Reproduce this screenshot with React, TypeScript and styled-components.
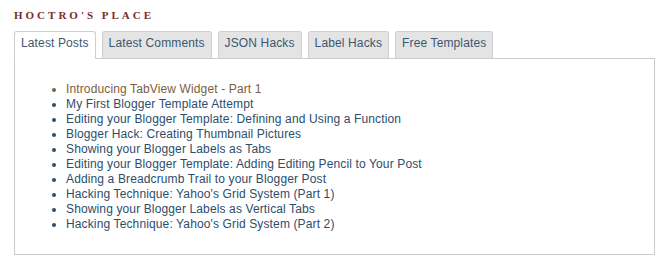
import React from "react";
import styled, { createGlobalStyle } from "styled-components";

const Global = createGlobalStyle`
  html, body { margin: 0; padding: 0; background: #fff; }
  body { font-family: "Liberation Sans", Arial, sans-serif; }
`;

const Page = styled.div`
  padding: 9px 7px 0 14px;
  width: 641px;
`;

const Title = styled.h2`
  margin: 0 0 9px;
  font-family: "Liberation Serif", "Times New Roman", serif;
  font-weight: bold;
  font-size: 11px;
  line-height: 13px;
  letter-spacing: 3px;
  color: #7d2a2a;
  text-transform: uppercase;
`;

const TabBar = styled.div`
  display: flex;
  gap: 6px;
  align-items: flex-end;
`;

const Tab = styled.div<{ $active?: boolean }>`
  font-size: 12px;
  line-height: 15px;
  letter-spacing: 0.13px;
  padding: 4px 6px 7px;
  border: 1px solid #cfcfcf;
  border-bottom: none;
  border-radius: 3px 3px 0 0;
  color: #3b5870;
  white-space: nowrap;
  background: ${(p) => (p.$active ? "#fff" : "#e4e4e4")};
  margin-bottom: ${(p) => (p.$active ? "-1px" : "0")};
  padding-bottom: ${(p) => (p.$active ? "8px" : "7px")};
  position: relative;
  z-index: ${(p) => (p.$active ? 1 : 0)};
`;

const Panel = styled.div`
  border: 1px solid #cccccc;
  padding: 10px;
  background: #fff;
`;

const List = styled.ul`
  margin: 13px 0 12px;
  padding-left: 41px;
  font-size: 12px;
  line-height: 15px;
  letter-spacing: 0.13px;
  list-style: disc;
`;

const Item = styled.li<{ $visited?: boolean }>`
  color: ${(p) => (p.$visited ? "#7a6142" : "#2d4d6c")};
`;

const tabs = ["Latest Posts", "Latest Comments", "JSON Hacks", "Label Hacks", "Free Templates"];

const posts = [
  "Introducing TabView Widget - Part 1",
  "My First Blogger Template Attempt",
  "Editing your Blogger Template: Defining and Using a Function",
  "Blogger Hack: Creating Thumbnail Pictures",
  "Showing your Blogger Labels as Tabs",
  "Editing your Blogger Template: Adding Editing Pencil to Your Post",
  "Adding a Breadcrumb Trail to your Blogger Post",
  "Hacking Technique: Yahoo's Grid System (Part 1)",
  "Showing your Blogger Labels as Vertical Tabs",
  "Hacking Technique: Yahoo's Grid System (Part 2)",
];

export default function App() {
  return (
    <>
      <Global />
      <Page>
        <Title>Hoctro's Place</Title>
        <TabBar>
          {tabs.map((t, i) => (
            <Tab key={t} $active={i === 0}>
              {t}
            </Tab>
          ))}
        </TabBar>
        <Panel>
          <List>
            {posts.map((p, i) => (
              <Item key={p} $visited={i === 0}>
                {p}
              </Item>
            ))}
          </List>
        </Panel>
      </Page>
    </>
  );
}
